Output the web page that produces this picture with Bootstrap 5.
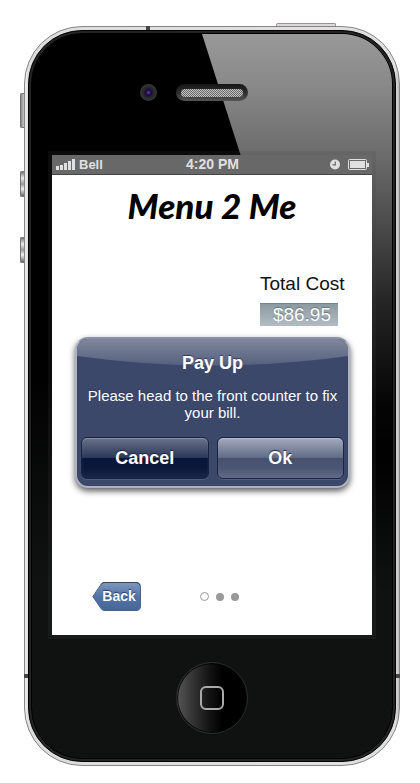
<!DOCTYPE html>
<html lang="en">
<head>
<meta charset="utf-8">
<meta name="viewport" content="width=device-width, initial-scale=1">
<title>Menu 2 Me</title>
<link href="https://cdn.jsdelivr.net/npm/bootstrap@5.3.0/dist/css/bootstrap.min.css" rel="stylesheet">
<style>
body{background:#fff;font-family:"Liberation Sans",Arial,sans-serif;color:#111}
.device{margin:26px 20px 18px 24px;max-width:480px}
.shell{border:1px solid #858585;border-radius:58px;background:linear-gradient(90deg,#efefef,#ddd 1%,#e2dfdf 99%,#bbb);padding:3px}
.antenna{background:#444;z-index:2}
.antenna-top{left:122px;top:0;width:4px;height:4px}
.antenna-left{left:0;bottom:88px;width:4px;height:4px}
.antenna-right{right:0;bottom:88px;width:4px;height:4px}
.rim{border:1px solid #000;border-radius:54px;background:#222426;padding:2px}
.glass{border:1px solid #000;border-radius:51px;overflow:hidden;background:linear-gradient(#000 0,#000 45%,#101211 76%)}
.glare{inset:0;background:linear-gradient(#999 0,#898989 50px,#6c6c6c 120px,#505050 180px,#242424 270px,#050505 370px,#000 420px,#101211 560px);clip-path:polygon(170px 0,100% 0,100% 81%,358px 590px)}
.side-key{left:-4px;width:5px;border:1px solid #777;border-right:0;border-radius:2px 0 0 2px;background:linear-gradient(#777,#eee 25%,#999 50%,#f4f4f4 70%,#666)}
.key-mute{top:67px;height:35px;background:linear-gradient(90deg,#888,#ddd)}
.key-up{top:145px;height:26px}
.key-down{top:211px;height:26px}
.key-power{right:64px;top:-3px;width:60px;height:4px;border:1px solid #99908f;border-bottom:0;border-radius:2px 2px 0 0;background:#ddd9d8}
.brow{display:grid;grid-template-columns:1fr 72px 1fr;height:121px;padding-top:16px;align-items:center;align-content:center;padding-bottom:20px}
.lens{margin-right:19px;width:17px;height:17px;border-radius:50%;background:radial-gradient(circle,#8b2bdc 0,#28105c 2px,#17122c 3px,#25262b 5px,#333437 8px)}
.speaker{height:17px;border-radius:9px;background:linear-gradient(#151515,#303030 55%,#555);padding:5px 5px 4px}
.mesh{height:8px;border-radius:4px;background:repeating-conic-gradient(#c4c4c4 0 25%,#666 0 50%) 0 0/2px 2px}
.display{margin:0 20px;background:#fff;box-shadow:0 0 0 4px rgba(70,70,70,.16)}
.status{height:20px;background:#686868;border-bottom:1px solid #444;display:grid;grid-template-columns:1fr auto 1fr;color:#e0e0e0;font-weight:bold;font-size:13px;line-height:19px;padding:0 3px 0 4px}
.clock{font-size:14px;line-height:19px}
.brand{font-family:"Marker Felt","Lato",sans-serif;font-weight:900;font-style:italic;font-size:35px;line-height:40px;color:#000;margin:10px 0 47px}
.total{width:85px;margin-right:27px;font-size:19px;line-height:24px}
.amount{width:78px;margin-top:7px;height:23px;line-height:22px;padding-right:7px;color:#fff;background:linear-gradient(#8b9aa1,#b3bcc3);border-top:1px solid #75858c;text-shadow:0 -1px 1px #65727a}
.alert-box{margin:11px 22px 0 23px;border:2px solid #aeb3c1;border-top-color:#8a90a5;border-radius:13px;background:#3c486a;box-shadow:0 3px 6px rgba(0,0,0,.65),inset 0 0 1px #26304e;color:#fff;padding:12px 4px 7px;overflow:hidden}
.sheen{left:0;top:0;width:100%;height:27px}
.alert-box h2{font-size:18px;line-height:24px;font-weight:bold;margin:0;text-shadow:0 -1px 1px #303b5c}
.alert-box p{font-size:15px;line-height:17px;margin:12px 0 16px;text-shadow:0 -1px 1px #303b5c}
.act{height:42px;border:1px solid #182446;border-radius:6px;color:#fff;font-size:18px;font-weight:bold;line-height:24px;text-shadow:0 -1px 1px #1b2645;padding:0;box-shadow:inset 0 1px 1px rgba(255,255,255,.25),0 1px 0 rgba(255,255,255,.12)}
.act-cancel{background:linear-gradient(#6a728a 0,#2b3858 49%,#08163a 50%,#0a1737 75%,#1a274a)}
.act-ok{background:linear-gradient(#a4aabd 0,#626c87 49%,#46516e 50%,#4b5674 75%,#626c89)}
.act:hover{color:#fff}
.foot{display:grid;grid-template-columns:1fr auto 1fr;align-items:center;padding:94px 0 24px}
.back{margin-left:40px;width:49px;height:29px;border:0;background:none;padding:0 5px 0 10px;color:#fff;font-size:14px;font-weight:bold;line-height:29px;text-shadow:0 -1px 1px #253c66}
.back svg{left:0;top:0}
.back span{position:relative}
.dots{gap:7px;padding-left:14px}
.dots button{width:8px;height:8px;border:0;border-radius:50%;padding:0;background:#999}
.dots .now{width:9px;height:9px;border:1px solid #999;background:#fff}
.chin{height:123px;padding-top:2px}
.home{width:72px;height:72px;border:1px solid #2b2c2c;border-radius:50%;background:linear-gradient(90deg,#555 0,#303030 25%,#111 48%,#000 65%);padding:0;box-shadow:inset 0 0 0 1px #050505}
</style>
<script src="https://cdn.jsdelivr.net/npm/bootstrap@5.3.0/dist/js/bootstrap.bundle.min.js"></script>
</head>
<body>
<main class="device position-relative">
  <div class="side-key key-mute position-absolute"></div>
  <div class="side-key key-up position-absolute"></div>
  <div class="side-key key-down position-absolute"></div>
  <div class="key-power position-absolute"></div>
  <div class="antenna antenna-top position-absolute"></div>
  <div class="antenna antenna-left position-absolute"></div>
  <div class="antenna antenna-right position-absolute"></div>
  <div class="shell position-relative">
    <div class="rim">
      <div class="glass position-relative">
        <div class="glare position-absolute"></div>
        <div class="position-relative">
          <div class="brow">
            <div class="lens ms-auto"></div>
            <div class="speaker"><div class="mesh"></div></div>
          </div>
          <section class="display">
            <div class="status">
              <div class="d-flex align-items-center">
                <svg class="me-1" width="19" height="11" viewBox="0 0 19 11" fill="#e0e0e0" aria-hidden="true"><path d="M0 7h3v4H0zM4 6h3v5H4zM8 4h3v7H8zM12 2h3v9h-3zM16 0h3v11h-3z"/></svg>
                <span>Bell</span>
              </div>
              <div class="clock">4:20 PM</div>
              <div class="d-flex align-items-center justify-content-end">
                <svg width="39" height="11" viewBox="0 0 39 11" aria-hidden="true">
                  <circle cx="5" cy="5.5" r="5" fill="#e0e0e0"/><path d="M5.3 2.5v3.3H2.5" fill="none" stroke="#686868" stroke-width="1.2"/>
                  <rect x="18.5" y=".5" width="18" height="10" rx="1" fill="none" stroke="#e0e0e0"/><path d="M20 2h15v7H20zM37 4h2v4h-2z" fill="#e0e0e0"/>
                </svg>
              </div>
            </div>
            <h1 class="brand text-center">Menu 2 Me</h1>
            <div class="total ms-auto text-nowrap">Total Cost<div class="amount text-end">$86.95</div></div>
            <div class="alert-box position-relative text-center" role="alertdialog" aria-labelledby="t" aria-describedby="m">
              <svg class="sheen position-absolute" viewBox="0 0 271 27" preserveAspectRatio="none" aria-hidden="true">
                <defs><linearGradient id="sh" x2="0" y2="1"><stop stop-color="#80879d"/><stop offset="1" stop-color="#56607e"/></linearGradient></defs>
                <path d="M0 0H271V17Q136 36 0 17Z" fill="url(#sh)"/>
              </svg>
              <div class="position-relative">
                <h2 id="t">Pay Up</h2>
                <p id="m">Please head to the front counter to fix your bill.</p>
                <div class="d-flex gap-2">
                  <button type="button" class="btn act act-cancel flex-fill w-50">Cancel</button>
                  <button type="button" class="btn act act-ok flex-fill w-50">Ok</button>
                </div>
              </div>
            </div>
            <div class="foot">
              <button type="button" class="back position-relative">
                <svg class="position-absolute" width="49" height="29" viewBox="0 0 49 29" aria-hidden="true">
                  <defs><linearGradient id="bk" x2="0" y2="1"><stop stop-color="#8097bc"/><stop offset=".5" stop-color="#5273a5"/><stop offset="1" stop-color="#466796"/></linearGradient></defs>
                  <path d="M12 .5H44Q48.500 .5 48.500 5V24Q48.500 28.500 44 28.500H12Q10.500 28.500 9 26.500L.8 14.500L9 2.500Q10.500 .5 12 .5Z" fill="url(#bk)" stroke="#49648f"/>
                  <path d="M9 2.500Q10.500 .5 12 .5H44Q47 .5 48 3" fill="none" stroke="#36465f"/>
                </svg>
                <span>Back</span>
              </button>
              <div class="dots d-flex align-items-center">
                <button type="button" class="now" aria-label="Page 1"></button>
                <button type="button" aria-label="Page 2"></button>
                <button type="button" aria-label="Page 3"></button>
              </div>
            </div>
          </section>
          <div class="chin d-flex align-items-center justify-content-center">
            <button type="button" class="home" aria-label="Home">
              <svg width="26" height="26" viewBox="0 0 26 26" aria-hidden="true"><rect x="2" y="2" width="22" height="22" rx="5" fill="none" stroke="#aaa" stroke-width="2"/></svg>
            </button>
          </div>
        </div>
      </div>
    </div>
  </div>
</main>
</body>
</html>
